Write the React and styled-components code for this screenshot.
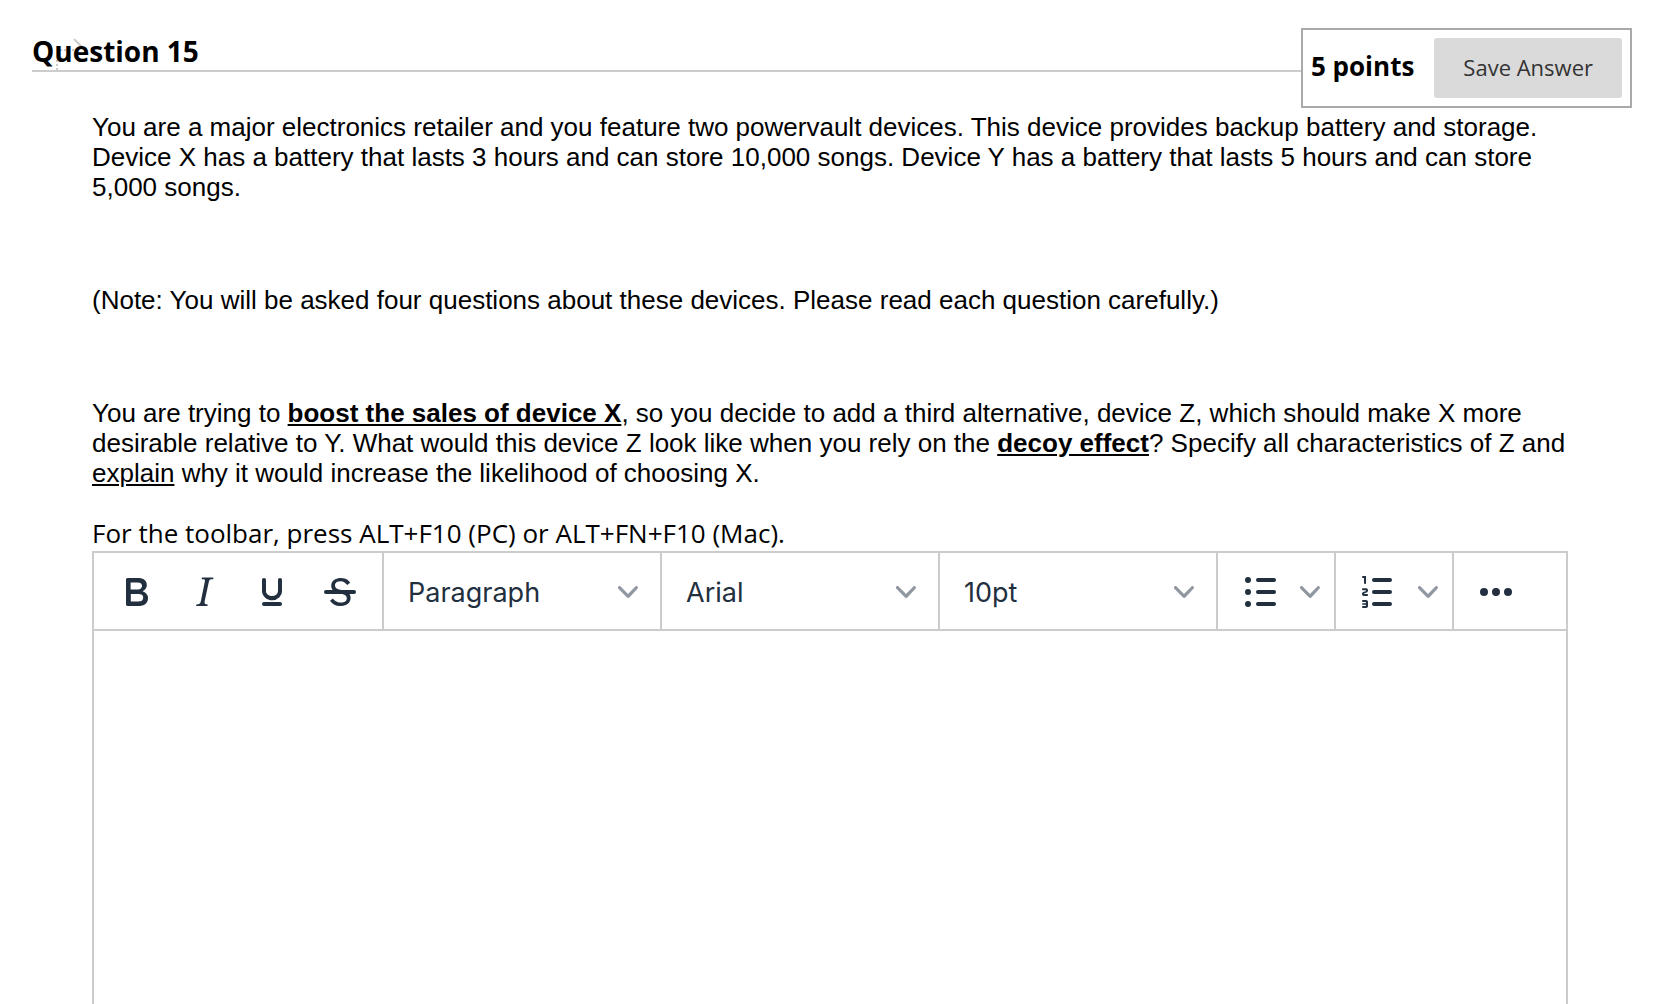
import { useState } from 'react'
import styled, { createGlobalStyle } from 'styled-components'

const GlobalStyle = createGlobalStyle`
  * {
    box-sizing: border-box;
  }

  body {
    margin: 0;
    background: #fff;
    color: #000;
    font-family: 'Open Sans', 'Noto Sans', sans-serif;
  }
`

const icons = {
  bold: 'M7.8 19c-.3 0-.5 0-.6-.2l-.2-.5V5.7c0-.2 0-.4.2-.5l.6-.2h5c1.5 0 2.7.3 3.5 1 .7.6 1.1 1.4 1.1 2.5a3 3 0 01-.6 1.9c-.4.6-1 1-1.6 1.2.4.1.9.3 1.3.6s.8.7 1 1.2c.4.4.5 1 .5 1.6 0 1.3-.4 2.3-1.3 3-.8.7-2.1 1-3.8 1H7.8zm5-8.3c.6 0 1.2-.1 1.6-.5.4-.3.6-.7.6-1.3 0-1.1-.8-1.7-2.3-1.7H9.3v3.5h3.4zm.5 6c.7 0 1.3-.1 1.7-.4.4-.4.6-.9.6-1.5s-.2-1-.7-1.4c-.4-.3-1-.4-2-.4H9.4v3.8h4z',
  italic: 'M16.7 4.7l-.1.9h-.3c-.6 0-1 0-1.4.3-.3.3-.4.6-.5 1.1l-2.1 9.8v.6c0 .5.4.8 1.4.8h.2l-.2.8H8l.2-.8h.2c1.1 0 1.8-.5 2-1.5l2-9.8.1-.5c0-.6-.4-.8-1.4-.8h-.3l.2-.9h5.8z',
  underline: 'M16 5c.6 0 1 .4 1 1v5.5a4 4 0 01-.4 1.8l-1 1.4a5.3 5.3 0 01-5.5 1 5 5 0 01-1.6-1c-.5-.4-.8-.9-1.1-1.4a4 4 0 01-.4-1.8V6c0-.6.4-1 1-1s1 .4 1 1v5.5c0 .3 0 .6.2 1l.6.7a3.3 3.3 0 002.2.8 3.4 3.4 0 002.2-.8c.3-.2.4-.5.6-.8l.2-.9V6c0-.6.4-1 1-1zM8 17h8c.6 0 1 .4 1 1s-.4 1-1 1H8a1 1 0 010-2z',
  bullets: 'M11 5h8a1 1 0 010 2h-8a1 1 0 010-2zm0 6h8a1 1 0 010 2h-8a1 1 0 010-2zm0 6h8a1 1 0 010 2h-8a1 1 0 010-2zM4.5 6a1.5 1.5 0 113 0 1.5 1.5 0 01-3 0zm0 6a1.5 1.5 0 113 0 1.5 1.5 0 01-3 0zm0 6a1.5 1.5 0 113 0 1.5 1.5 0 01-3 0z',
  numbers: 'M10 17h8a1 1 0 010 2h-8a1 1 0 010-2zm0-6h8a1 1 0 010 2h-8a1 1 0 010-2zm0-6h8a1 1 0 010 2h-8a1 1 0 010-2zM6 4v3.5c0 .3-.2.5-.5.5a.5.5 0 01-.5-.5V5h-.5a.5.5 0 010-1H6zm-1 8.8l.2.2h1.3c.3 0 .5.2.5.5s-.2.5-.5.5H4.9a1 1 0 01-.9-1V13c0-.4.3-.8.6-1l1.2-.4.2-.3a.2.2 0 00-.2-.2H4.5a.5.5 0 01-.5-.5c0-.3.2-.5.5-.5h1.6c.5 0 .9.4.9 1v.1c0 .4-.3.8-.6 1l-1.2.4-.2.3zM7 17v2c0 .6-.4 1-1 1H4.5a.5.5 0 010-1h1.2c.2 0 .3-.1.3-.3 0-.2-.1-.3-.3-.3H4.4a.4.4 0 110-.8h1.3c.2 0 .3-.1.3-.3 0-.2-.1-.3-.3-.3H4.5a.5.5 0 110-1H6c.6 0 1 .4 1 1z',
  more: 'M6 10a2 2 0 100 4 2 2 0 000-4zm12 0a2 2 0 100 4 2 2 0 000-4zm-6 0a2 2 0 100 4 2 2 0 000-4z',
}

// two overlapping shapes, so they are kept as separate paths
const strikethrough = [
  'M15.6 8.5c-.5-.7-1-1.1-1.3-1.3-.6-.4-1.3-.6-2-.6-2.7 0-2.8 1.7-2.8 2.1 0 1.6 1.8 2 3.2 2.3 4.4.9 4.6 2.8 4.6 3.9 0 1.4-.7 4.1-5 4.1A6.2 6.2 0 017 16.4l1.5-1.1c.4.6 1.6 2 3.7 2 1.6 0 2.5-.4 3-1.2.4-.8.3-2-.8-2.6-.7-.4-1.6-.7-2.9-1-1-.2-3.9-.8-3.9-3.6C7.6 6 10.3 5 12.4 5c2.9 0 4.2 1.6 4.7 2.4l-1.5 1.1z',
  'M5 11h14a1 1 0 010 2H5a1 1 0 010-2z',
]

const Page = styled.main`
  display: flex;
  flex-direction: column;
  min-height: 100vh;
  padding-top: 28px;
`

const Header = styled.header`
  display: flex;
  align-items: flex-start;
  padding: 0 26px 0 32px;
`

const Title = styled.h3`
  position: relative;
  flex: 1;
  height: 44px;
  margin: 0;
  border-bottom: 2px solid #ccc;
  font-size: 28px;
  line-height: 46px;
`

const TitleMark = styled.svg`
  position: absolute;
  left: 20px;
  top: 8px;
  z-index: -1;
`

const Points = styled.div`
  display: flex;
  align-items: center;
  gap: 20px;
  padding: 8px;
  border: 2px solid #a9a9a9;
`

const PointsValue = styled.span`
  padding-bottom: 4px;
  font-size: 26px;
  font-weight: bold;
`

const SaveButton = styled.button`
  height: 60px;
  padding: 0 29px 2px;
  border: none;
  border-radius: 3px;
  background: #dadada;
  color: #333;
  font-family: inherit;
  font-size: 22px;
`

const Content = styled.section`
  display: flex;
  flex: 1;
  flex-direction: column;
  padding: 4px 90px 0 92px;
`

const Prompt = styled.div`
  display: flex;
  flex-direction: column;
  gap: 83px;
  font-family: 'Liberation Sans', Arial, sans-serif;
  font-size: 26px;
  line-height: 30px;

  & p {
    margin: 0;
  }
`

const EditorLabel = styled.label`
  margin-top: 27px;
  font-size: 26px;
  line-height: 36px;
`

const Editor = styled.div`
  display: flex;
  flex: 1;
  flex-direction: column;
  border: 2px solid #ccc;
  border-bottom: none;
`

const Toolbar = styled.div`
  display: flex;
  border-bottom: 2px solid #ccc;
`

const ToolGroup = styled.div`
  display: flex;
  align-items: center;
  height: 76px;
  padding: 2px 8px 0;

  & + & {
    border-left: 2px solid #ccc;
  }
`

const ToolButton = styled.button`
  display: flex;
  align-items: center;
  justify-content: center;
  width: ${({ $narrow }) => ($narrow ? '32px' : '68px')};
  height: 68px;
  padding: 0;
  border: none;
  background: none;
  color: #222f3e;
`

const SelectBox = styled.div`
  display: grid;
  align-items: center;
  width: 260px;

  & > * {
    grid-area: 1 / 1;
  }

  & svg {
    justify-self: end;
    margin-right: 14px;
    pointer-events: none;
  }
`

const ToolSelect = styled.select`
  appearance: none;
  width: 100%;
  height: 68px;
  padding: 0 40px 0 16px;
  border: none;
  outline: none;
  background: none;
  color: #222f3e;
  font-family: Inter, sans-serif;
  font-size: 27px;
`

const Body = styled.textarea`
  flex: 1;
  width: 100%;
  padding: 16px;
  border: none;
  outline: none;
  resize: none;
  font-family: 'Liberation Sans', Arial, sans-serif;
  font-size: 26px;
`

const Icon = ({ id }) => (
  <svg width="48" height="48" viewBox="0 0 24 24" fill="currentColor" aria-hidden="true">
    {id === 'strikethrough' ? strikethrough.map((d) => <path d={d} key={d} />) : <path d={icons[id]} fillRule="evenodd" />}
  </svg>
)

const Chevron = () => (
  <svg width="20" height="20" viewBox="0 0 10 10" fill="#9097a0" aria-hidden="true">
    <path d="M8.7 2.2c.3-.3.8-.3 1 0 .4.4.4.9 0 1.2L5.7 7.8c-.3.3-.9.3-1.2 0L.2 3.4a.8.8 0 010-1.2c.3-.3.8-.3 1.1 0L5 6l3.7-3.8z" />
  </svg>
)

const FormatSelect = ({ label, options }) => {
  const [value, setValue] = useState(options[0])

  return (
    <ToolGroup>
      <SelectBox>
        <ToolSelect aria-label={label} value={value} onChange={({ target }) => setValue(target.value)}>
          {options.map((option) => (
            <option key={option}>{option}</option>
          ))}
        </ToolSelect>
        <Chevron />
      </SelectBox>
    </ToolGroup>
  )
}

const ListButton = ({ id, label }) => (
  <ToolGroup>
    <ToolButton type="button" aria-label={label}>
      <Icon id={id} />
    </ToolButton>
    <ToolButton type="button" $narrow aria-label={`${label} menu`}>
      <Chevron />
    </ToolButton>
  </ToolGroup>
)

const App = () => (
  <>
    <GlobalStyle />
    <Page>
      <Header>
        <Title>
          <TitleMark width="34" height="34" viewBox="0 0 34 34" fill="none" stroke="#ccc" strokeWidth="2" aria-hidden="true">
            <path d="M22 3l8 8" />
            <path d="M8 14h16" strokeDasharray="2 2" />
            <path d="M5 24v10" strokeDasharray="2 2" />
          </TitleMark>
          Question 15
        </Title>
        <Points>
          <PointsValue>5 points</PointsValue>
          <SaveButton type="button">Save Answer</SaveButton>
        </Points>
      </Header>
      <Content>
        <Prompt>
          <p>
            You are a major electronics retailer and you feature two powervault devices. This device provides backup battery and storage. Device X has a battery that lasts 3 hours and can store 10,000 songs. Device Y has a battery that lasts 5 hours and can store 5,000 songs.
          </p>
          <p>(Note: You will be asked four questions about these devices. Please read each question carefully.)</p>
          <p>
            You are trying to <b><u>boost the sales of device X</u></b>, so you decide to add a third alternative, device Z, which should make X more desirable relative to Y. What would this device Z look like when you rely on the <b><u>decoy effect</u></b>? Specify all characteristics of Z and <u>explain</u> why it would increase the likelihood of choosing X.
          </p>
        </Prompt>
        <EditorLabel htmlFor="answer">For the toolbar, press ALT+F10 (PC) or ALT+FN+F10 (Mac).</EditorLabel>
        <Editor>
          <Toolbar role="toolbar">
            <ToolGroup>
              {['bold', 'italic', 'underline', 'strikethrough'].map((id) => (
                <ToolButton type="button" key={id} aria-label={id}>
                  <Icon id={id} />
                </ToolButton>
              ))}
            </ToolGroup>
            <FormatSelect label="Blocks" options={['Paragraph', 'Heading', 'Sub Heading 1', 'Sub Heading 2']} />
            <FormatSelect label="Fonts" options={['Arial', 'Courier New', 'Georgia', 'Verdana']} />
            <FormatSelect label="Font sizes" options={['10pt', '12pt', '14pt', '18pt', '24pt']} />
            <ListButton id="bullets" label="Bullet list" />
            <ListButton id="numbers" label="Numbered list" />
            <ToolGroup>
              <ToolButton type="button" aria-label="More">
                <Icon id="more" />
              </ToolButton>
            </ToolGroup>
          </Toolbar>
          <Body id="answer" />
        </Editor>
      </Content>
    </Page>
  </>
)

export default App
